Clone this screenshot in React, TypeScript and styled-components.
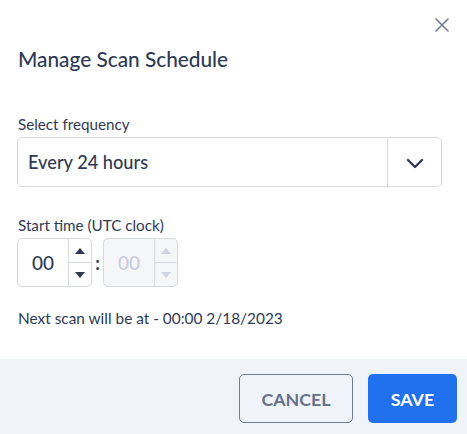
import styled, { createGlobalStyle } from 'styled-components';

const GlobalStyle = createGlobalStyle`
    html, body {
        margin: 0;
        padding: 0;
        background: #ffffff;
    }
    body {
        font-family: "Lato", "Noto Sans", sans-serif;
        color: #2e3a55;
    }
`

function CloseIcon() {
    return (
        <svg width="14" height="14" viewBox="0 0 14 14">
            <path d="M1 1 L13 13 M13 1 L1 13" stroke="#6e7b96" strokeWidth="1.6" strokeLinecap="round" />
        </svg>
    )
}

function Chevron() {
    return (
        <svg width="18" height="11" viewBox="0 0 18 11">
            <path d="M2 2 L9 9 L16 2" stroke="#2e3a55" strokeWidth="2.4" fill="none" strokeLinecap="round" strokeLinejoin="round" />
        </svg>
    )
}

function Arrow({ up, disabled }: { up?: boolean; disabled?: boolean }) {
    const color = disabled ? '#cfd3e3' : '#2e3a55';
    return (
        <svg width="10" height="6" viewBox="0 0 10 6">
            <path d={up ? 'M0 6 L5 0 L10 6 Z' : 'M0 0 L10 0 L5 6 Z'} fill={color} />
        </svg>
    )
}

function TimeSpinner({ value, disabled }: { value: string; disabled?: boolean }) {
    return (
        <Spinner $disabled={disabled}>
            <SpinValue $disabled={disabled}>{value}</SpinValue>
            <SpinButtons>
                <SpinButton><Arrow up disabled={disabled} /></SpinButton>
                <SpinButton $bottom><Arrow disabled={disabled} /></SpinButton>
            </SpinButtons>
        </Spinner>
    )
}

export default function App() {
    return (
        <>
            <GlobalStyle />
            <Modal>
                <Body>
                    <CloseRow>
                        <CloseButton aria-label="close"><CloseIcon /></CloseButton>
                    </CloseRow>
                    <Title>Manage Scan Schedule</Title>
                    <Field $top={43}>
                        <Label>Select frequency</Label>
                        <Select>
                            <SelectValue>Every 24 hours</SelectValue>
                            <SelectToggle><Chevron /></SelectToggle>
                        </Select>
                    </Field>
                    <Field $top={29}>
                        <Label>Start time (UTC clock)</Label>
                        <TimeRow>
                            <TimeSpinner value="00" />
                            <Colon>:</Colon>
                            <TimeSpinner value="00" disabled />
                        </TimeRow>
                    </Field>
                    <Note>Next scan will be at - 00:00 2/18/2023</Note>
                </Body>
                <Footer>
                    <CancelButton>CANCEL</CancelButton>
                    <SaveButton>SAVE</SaveButton>
                </Footer>
            </Modal>
        </>
    )
}

const Modal = styled.div`
    width: 467px;
    height: 434px;
    display: flex;
    flex-direction: column;
    background: #ffffff;
`

const Body = styled.div`
    flex: 1;
    display: flex;
    flex-direction: column;
    padding: 16px 25px 0 17px;
`

const CloseRow = styled.div`
    display: flex;
    justify-content: flex-end;
    height: 20px;
    margin-right: -7px;
`

const CloseButton = styled.button`
    border: none;
    background: none;
    padding: 2px 0 0;
    width: 14px;
    height: 18px;
    cursor: pointer;
`

const Title = styled.h2`
    margin: 10px 0 0 1px;
    font-size: 20.8px;
    font-weight: 500;
    line-height: 26px;
    color: #2e3a55;
`

const Field = styled.div<{ $top: number }>`
    display: flex;
    flex-direction: column;
    gap: 4px;
    margin-top: ${p => p.$top}px;
`

const Label = styled.label`
    font-size: 15.2px;
    line-height: 18px;
    margin-left: 1px;
    color: #2e3a55;
`

const Select = styled.div`
    display: flex;
    height: 50px;
    border: 1px solid #d6d9e0;
    border-radius: 5px;
    box-sizing: border-box;
`

const SelectValue = styled.div`
    flex: 1;
    display: flex;
    align-items: center;
    padding-left: 10px;
    font-size: 18.2px;
    font-weight: 500;
    color: #2e3a55;
`

const SelectToggle = styled.div`
    width: 53px;
    border-left: 1px solid #d6d9e0;
    display: flex;
    align-items: center;
    justify-content: center;
    padding-top: 2px;
`

const TimeRow = styled.div`
    display: flex;
    align-items: center;
`

const Spinner = styled.div<{ $disabled?: boolean }>`
    display: flex;
    width: 75px;
    height: 49px;
    box-sizing: border-box;
    border: 1px solid #d6d9e0;
    border-radius: 5px;
    background: ${p => (p.$disabled ? '#f5f6f8' : '#ffffff')};
    overflow: hidden;
`

const SpinValue = styled.div<{ $disabled?: boolean }>`
    flex: 1;
    display: flex;
    align-items: center;
    justify-content: center;
    font-size: 19px;
    font-weight: 500;
    color: ${p => (p.$disabled ? '#c9cde0' : '#2e3a55')};
`

const SpinButtons = styled.div`
    width: 22px;
    border-left: 1px solid #d6d9e0;
    display: flex;
    flex-direction: column;
`

const SpinButton = styled.div<{ $bottom?: boolean }>`
    flex: 1;
    display: flex;
    align-items: center;
    justify-content: center;
    border-top: ${p => (p.$bottom ? '1px solid #d6d9e0' : 'none')};
`

const Colon = styled.span`
    width: 11px;
    text-align: center;
    font-size: 18px;
    font-weight: 700;
    color: #2e3a55;
`

const Note = styled.p`
    margin: 22px 0 0 1px;
    font-size: 15.4px;
    line-height: 18px;
    color: #2e3a55;
`

const Footer = styled.div`
    height: 75px;
    background: #eff3fa;
    display: flex;
    justify-content: flex-end;
    align-items: flex-start;
    gap: 15px;
    padding: 15px 10px 0 0;
    box-sizing: border-box;
`

const CancelButton = styled.button`
    width: 114px;
    height: 49px;
    border: 1px solid #737d95;
    border-radius: 5px;
    background: transparent;
    color: #667089;
    font-family: inherit;
    font-size: 17.8px;
    font-weight: 700;
    cursor: pointer;
`

const SaveButton = styled.button`
    width: 89px;
    height: 49px;
    border: none;
    border-radius: 5px;
    background: #2171ee;
    color: #ffffff;
    font-family: inherit;
    font-size: 17.8px;
    font-weight: 700;
    cursor: pointer;
`
